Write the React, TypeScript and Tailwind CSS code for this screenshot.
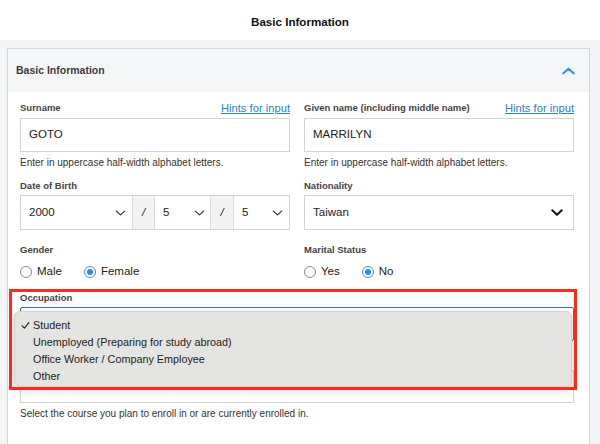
function Chevron({ className = "", strong = false }: { className?: string; strong?: boolean }) {
  return (
    <svg viewBox="0 0 14 8" className={className} fill="none">
      <path
        d="M1.5 1.5 L7 6.5 L12.5 1.5"
        stroke="currentColor"
        strokeWidth={strong ? 2.4 : 1.7}
        strokeLinecap="round"
        strokeLinejoin="round"
      />
    </svg>
  )
}

function Radio({ label, checked }: { label: string; checked?: boolean }) {
  return (
    <label className="flex items-center gap-[5px] text-[11.5px] text-[#222]">
      <span
        className={
          checked
            ? "flex h-[12px] w-[12px] items-center justify-center rounded-full border border-[#3b8ef0] bg-white"
            : "h-[12px] w-[12px] rounded-full border border-[#8a8a8a] bg-white"
        }
      >
        {checked && <span className="h-[6px] w-[6px] rounded-full bg-[#2f86ec]" />}
      </span>
      {label}
    </label>
  )
}

function Label({ children, hint }: { children?: string; hint?: boolean }) {
  return (
    <div className="flex h-[16px] items-center justify-between">
      <span className="text-[9.5px] font-bold text-[#444]">{children}</span>
      {hint && <a className="text-[11.2px] text-[#2b7fd0] underline">Hints for input</a>}
    </div>
  )
}

const options = [
  "Student",
  "Unemployed (Preparing for study abroad)",
  "Office Worker / Company Employee",
  "Other",
]

export default function App() {
  const occupation = "Student"

  return (
    <div className="relative h-[444px] w-[600px] overflow-hidden bg-white font-['Liberation_Sans',Arial,sans-serif]">
      <div className="flex h-[40px] items-center justify-center pt-[4px]">
        <h1 className="text-[11.6px] font-bold text-[#111]">Basic Information</h1>
      </div>

      <div className="h-[404px] bg-[#f3f4f6] pl-[7px] pr-[10px] pt-[8px]">
        <div className="border border-[#d6d6d8] bg-white">
          <div className="flex h-[43px] items-center justify-between bg-[#f5f6f8] pl-[8px] pr-[14px]">
            <span className="text-[10.5px] font-bold text-[#3c3c3c]">Basic Information</span>
            <svg viewBox="0 0 14 8" className="h-[8px] w-[13px] text-[#2f8fe8]" fill="none">
              <path d="M1.5 6.5 L7 1.5 L12.5 6.5" stroke="currentColor" strokeWidth={2.2} strokeLinecap="round" strokeLinejoin="round" />
            </svg>
          </div>

          <div className="pb-[30px] pl-[12px] pr-[15px] pt-[8px]">
            <div className="grid grid-cols-2 gap-x-[14px]">
              <div>
                <Label hint>Surname</Label>
                <div className="mt-[2px] flex h-[34px] items-center border border-[#d4d4d4] px-[8px] text-[11.5px] text-[#222]">
                  GOTO
                </div>
                <p className="mt-[4px] text-[10px] leading-[14px] text-[#333]">
                  Enter in uppercase half-width alphabet letters.
                </p>
              </div>
              <div>
                <Label hint>Given name (including middle name)</Label>
                <div className="mt-[2px] flex h-[34px] items-center border border-[#d4d4d4] px-[8px] text-[11.5px] text-[#222]">
                  MARRILYN
                </div>
                <p className="mt-[4px] text-[10px] leading-[14px] text-[#333]">
                  Enter in uppercase half-width alphabet letters.
                </p>
              </div>

              <div className="mt-[8px]">
                <Label>Date of Birth</Label>
                <div className="mt-[1px] flex h-[35px] border border-[#d4d4d4] text-[11.5px] text-[#222]">
                  <div className="flex flex-1 items-center justify-between pl-[8px] pr-[6px]">
                    2000
                    <Chevron className="h-[6px] w-[11px] text-[#333]" />
                  </div>
                  <div className="flex w-[23px] items-center justify-center border-x border-[#dcdcdc] bg-[#f3f3f3] italic">/</div>
                  <div className="flex w-[55px] items-center justify-between pl-[8px] pr-[5px]">
                    5
                    <Chevron className="h-[6px] w-[11px] text-[#333]" />
                  </div>
                  <div className="flex w-[24px] items-center justify-center border-x border-[#dcdcdc] bg-[#f3f3f3] italic">/</div>
                  <div className="flex w-[55px] items-center justify-between pl-[8px] pr-[6px]">
                    5
                    <Chevron className="h-[6px] w-[11px] text-[#333]" />
                  </div>
                </div>
              </div>
              <div className="mt-[8px]">
                <Label>Nationality</Label>
                <div className="mt-[1px] flex h-[35px] items-center justify-between border border-[#d4d4d4] pl-[8px] pr-[10px] text-[11.5px] text-[#222]">
                  Taiwan
                  <Chevron strong className="h-[7px] w-[12px] text-[#111]" />
                </div>
              </div>

              <div className="mt-[12px]">
                <Label>Gender</Label>
                <div className="mt-[4px] flex h-[20px] items-center gap-[22px]">
                  <Radio label="Male" />
                  <Radio label="Female" checked />
                </div>
              </div>
              <div className="mt-[12px]">
                <Label>Marital Status</Label>
                <div className="mt-[4px] flex h-[20px] items-center gap-[22px]">
                  <Radio label="Yes" />
                  <Radio label="No" checked />
                </div>
              </div>
            </div>

            <div className="mt-[8px]">
              <Label>Occupation</Label>
              {/* focused select, its value is covered by the open menu */}
              <div className="mt-[1px] h-[34px] rounded-[2px] border-[1.5px] border-[#2f6fd6]" />
            </div>
            <div className="mt-[8px]">
              <Label />
              <div className="mt-[5px] h-[33px] border border-[#d4d4d4]" />
              <p className="mt-[4px] text-[10px] leading-[14px] text-[#333]">
                Select the course you plan to enroll in or are currently enrolled in.
              </p>
            </div>
          </div>
        </div>
      </div>

      <div className="absolute left-[14px] top-[311px] h-[76px] w-[558px] rounded-[6px] border border-[#d2d2d2] bg-[#e4e4e3] py-[5px] shadow-[0_3px_8px_rgba(0,0,0,0.18)]">
        {options.map((o) => (
          <div key={o} className="flex h-[17px] items-center text-[10.8px] leading-[17px] text-[#222]">
            <span className="flex w-[18px] shrink-0 items-center justify-end pr-[3px]">
              {o === occupation && (
                <svg viewBox="0 0 10 10" className="h-[9px] w-[9px]" fill="none">
                  <path d="M1.2 5.4 L3.8 8 L8.8 1.8" stroke="#222" strokeWidth={1.3} strokeLinecap="round" strokeLinejoin="round" />
                </svg>
              )}
            </span>
            {o}
          </div>
        ))}
      </div>

      <div className="pointer-events-none absolute left-[9px] top-[289px] h-[101px] w-[568px] border-[3px] border-[#ff2a1a]" />
    </div>
  )
}
